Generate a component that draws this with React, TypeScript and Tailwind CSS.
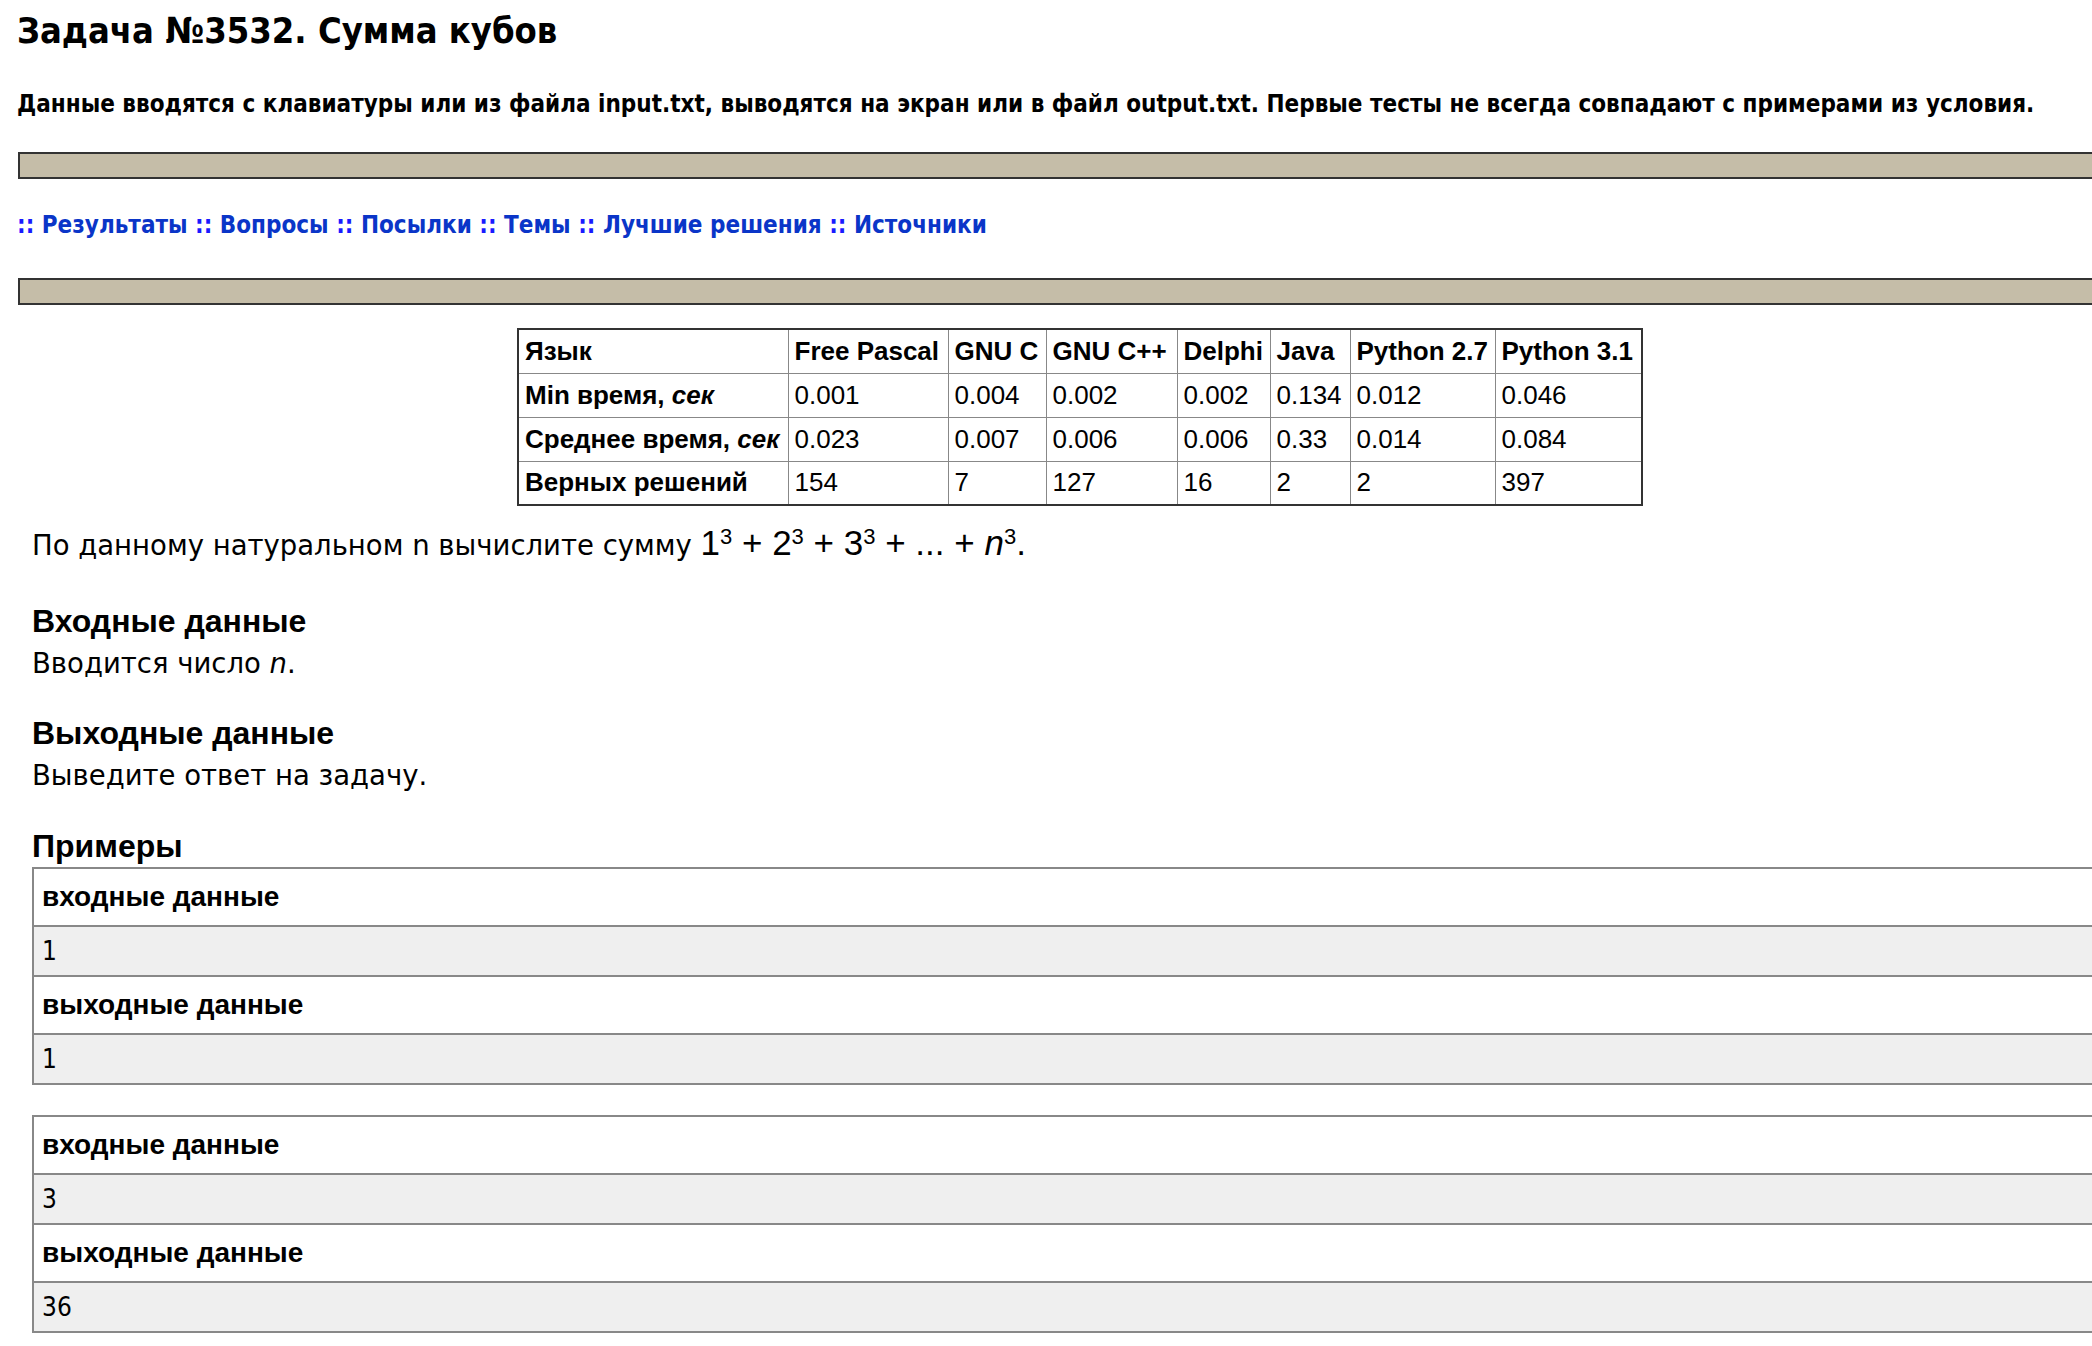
import React from 'react';

const tahoma = "font-['DejaVu_Sans_Condensed','DejaVu_Sans',sans-serif]";
const verdana = "font-['DejaVu_Sans',sans-serif]";
const arial = "font-['Liberation_Sans',Arial,sans-serif]";

const langs = ['Free Pascal', 'GNU C', 'GNU C++', 'Delphi', 'Java', 'Python 2.7', 'Python 3.1'];
const colWidths = ['w-[270px]', 'w-[160px]', 'w-[98px]', 'w-[131px]', 'w-[93px]', 'w-[80px]', 'w-[145px]', 'w-[147px]'];

const rows: { label: React.ReactNode; values: string[] }[] = [
  { label: <>Min время, <i>сек</i></>, values: ['0.001', '0.004', '0.002', '0.002', '0.134', '0.012', '0.046'] },
  { label: <>Среднее время, <i>сек</i></>, values: ['0.023', '0.007', '0.006', '0.006', '0.33', '0.014', '0.084'] },
  { label: 'Верных решений', values: ['154', '7', '127', '16', '2', '2', '397'] },
];

const examples = [
  { input: '1', output: '1' },
  { input: '3', output: '36' },
];

const Bar: React.FC<{ className?: string }> = ({ className = '' }) => (
  <div className={`h-[27px] border-2 border-[#333333] bg-[#c5bda8] ${className}`}></div>
);

const Sep = () => <span className="text-[#1a1aff]">::</span>;

const NavLink: React.FC<{ children: React.ReactNode }> = ({ children }) => (
  <a className="text-[#0a35c8] no-underline" href="#">{children}</a>
);

const Example: React.FC<{ input: string; output: string }> = ({ input, output }) => (
  <div className="border-2 border-[#888888] mb-[30px]">
    <div className={`h-[56px] flex items-center px-[8px] ${arial} font-bold text-[28px] text-black`}>входные данные</div>
    <div className={`h-[52px] flex items-center px-[8px] border-y-2 border-[#888888] bg-[#efefef] ${tahoma} text-[26px] text-black`}>{input}</div>
    <div className={`h-[56px] flex items-center px-[8px] ${arial} font-bold text-[28px] text-black`}>выходные данные</div>
    <div className={`h-[50px] flex items-center px-[8px] border-t-2 border-[#888888] bg-[#efefef] ${tahoma} text-[26px] text-black`}>{output}</div>
  </div>
);

const sup = 'text-[22px]';

export default function App() {
  return (
    <div className="w-screen min-h-screen overflow-hidden bg-white text-black">
      <div className="w-[2124px] ml-[18px]">
        <div className={`h-[61px] flex items-center -ml-[1px] ${tahoma} font-bold text-[36px]`}>
          Задача №3532. Сумма кубов
        </div>
        <div className={`h-[79px] pt-[6px] flex items-center -ml-[1px] ${tahoma} font-bold text-[24px]`}>
          Данные вводятся с клавиатуры или из файла input.txt, выводятся на экран или в файл output.txt. Первые тесты не всегда совпадают с примерами из условия.
        </div>
        <Bar className="mt-[12px]" />
        <div className={`h-[90px] pt-[2px] flex items-center -ml-[1px] ${tahoma} font-bold text-[24px]`}>
          <span className="whitespace-pre">
            <Sep /> <NavLink>Результаты</NavLink> <Sep /> <NavLink>Вопросы</NavLink> <Sep /> <NavLink>Посылки</NavLink> <Sep /> <NavLink>Темы</NavLink> <Sep /> <NavLink>Лучшие решения</NavLink> <Sep /> <NavLink>Источники</NavLink>
          </span>
        </div>
        <Bar className="mt-[9px]" />

        <table className={`mt-[23px] mx-auto border-collapse border-2 border-[#333333] ${arial} text-[26px] table-fixed`}>
          <thead>
            <tr className="h-[44px]">
              <th className={`${colWidths[0]} border border-[#888888] px-[6px] text-left font-bold`}>Язык</th>
              {langs.map((l, i) => (
                <th key={l} className={`${colWidths[i + 1]} border border-[#888888] px-[6px] text-left font-bold whitespace-nowrap`}>{l}</th>
              ))}
            </tr>
          </thead>
          <tbody>
            {rows.map((r, ri) => (
              <tr key={ri} className="h-[44px]">
                <td className="border border-[#888888] px-[6px] font-bold whitespace-nowrap">{r.label}</td>
                {r.values.map((v, vi) => (
                  <td key={vi} className="border border-[#888888] px-[6px] whitespace-nowrap">{v}</td>
                ))}
              </tr>
            ))}
          </tbody>
        </table>

        <div className="pl-[14px]">
          <div className={`mt-[13px] h-[48px] flex items-center ${verdana} text-[27.5px]`}>
            <span className="whitespace-pre">
              По данному натуральном n вычислите сумму <span className={`${arial} text-[35px]`}>1<sup className={sup}>3</sup> + 2<sup className={sup}>3</sup> + 3<sup className={sup}>3</sup> + ... + <i>n</i><sup className={sup}>3</sup>.</span>
            </span>
          </div>

          <div className={`mt-[34px] h-[40px] flex items-center ${arial} font-bold text-[32px]`}>Входные данные</div>
          <div className={`mt-[3px] h-[40px] flex items-center ${verdana} text-[27.5px]`}>
            <span>Вводится число <i>n</i>.</span>
          </div>

          <div className={`mt-[29px] h-[40px] flex items-center ${arial} font-bold text-[32px]`}>Выходные данные</div>
          <div className={`mt-[3px] h-[40px] flex items-center ${verdana} text-[27.5px]`}>Выведите ответ на задачу.</div>

          <div className={`mt-[30px] h-[40px] flex items-center ${arial} font-bold text-[32px]`}>Примеры</div>
          <div className="mt-[1px]">
            {examples.map((e, i) => (
              <Example key={i} input={e.input} output={e.output} />
            ))}
          </div>
        </div>
      </div>
    </div>
  );
}
